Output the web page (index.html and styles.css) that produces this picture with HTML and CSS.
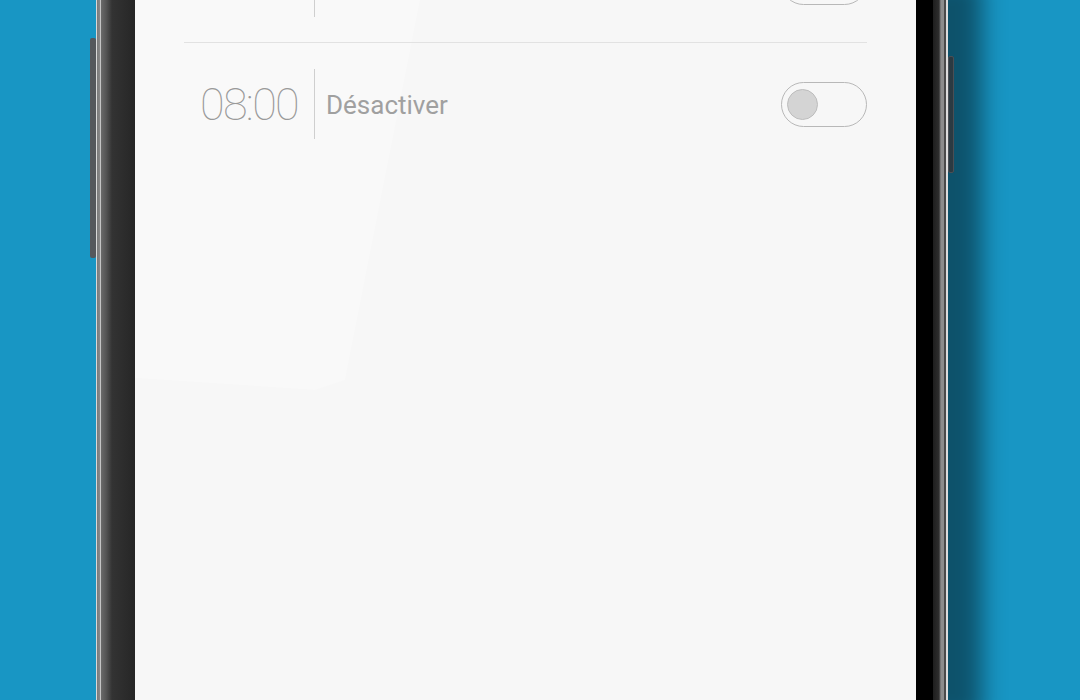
FILE: index.html
```html
<!DOCTYPE html>
<html lang="fr">
<head>
    <meta charset="UTF-8">
    <meta name="viewport" content="width=device-width, initial-scale=1.0">
    <title>Alarmes</title>
    <link rel="stylesheet" href="styles.css">
</head>
<body>
    <div class="phone">
        <span class="side-button left"></span>
        <span class="side-button right"></span>
        <div class="screen">
            <div class="glare"></div>
            <ul class="alarm-list">
                <li class="alarm">
                    <span class="time">07:00</span>
                    <span class="divider"></span>
                    <span class="label">Désactiver</span>
                    <span class="toggle"><span class="knob"></span></span>
                </li>
                <li class="alarm">
                    <span class="time">08:00</span>
                    <span class="divider"></span>
                    <span class="label">Désactiver</span>
                    <span class="toggle"><span class="knob"></span></span>
                </li>
            </ul>
        </div>
    </div>
</body>
</html>
```

FILE: styles.css
```css
body {
    margin: 0;
    padding: 0 0 0 96px;
    height: 700px;
    overflow: hidden;
    background-color: #1896c4;
    font-family: Roboto, 'Noto Sans', sans-serif;
}

.phone {
    position: relative;
    width: 852px;
    height: 750px;
    margin-top: -25px;
    box-sizing: border-box;
    padding: 0 32px 0 39px;
    background: linear-gradient(to right,
        #d9d9d9 0, #d9d9d9 1px,
        #7a7a7a 1px, #8a8a8a 4px,
        #c4c4c4 4px, #c4c4c4 5px,
        #6a6a6a 5px, #555 10px,
        #333 16px, #262626 39px,
        #000 39px, #000 calc(100% - 15px),
        #1e1e1e calc(100% - 15px), #2e2e2e calc(100% - 9px),
        #8c8c8c calc(100% - 7px), #8c8c8c calc(100% - 4px),
        #4a4a4a calc(100% - 4px), #4a4a4a calc(100% - 2px),
        #dcdcdc calc(100% - 2px));
    box-shadow: 38px 0 22px -4px rgba(0, 0, 0, 0.45);
}

.side-button {
    position: absolute;
    width: 6px;
    border-radius: 2px;
    background-color: #55585c;
}

.side-button.left {
    left: -6px;
    top: 63px;
    height: 220px;
}

.side-button.right {
    right: -6px;
    top: 81px;
    height: 117px;
    background-color: #2b3a42;
    border: 1px solid #4a4f55;
    box-sizing: border-box;
}

.screen {
    position: relative;
    height: 100%;
    background-color: #f7f7f7;
    overflow: hidden;
}

.glare {
    position: absolute;
    inset: 0;
    background-color: rgba(255, 255, 255, 0.25);
    clip-path: polygon(0 0, 290px 0, 210px 405px, 180px 415px, 0 403px);
}

.alarm-list {
    position: relative;
    list-style: none;
    margin: -54px 49px 0 49px;
    padding: 0;
}

.alarm {
    display: flex;
    align-items: center;
    height: 121px;
    padding-left: 16px;
    line-height: 1;
}

.alarm + .alarm {
    border-top: 1px solid #e2e2e2;
}

.time {
    width: 100px;
    margin-top: 1px;
    font-size: 45px;
    font-weight: 100;
    color: #9a9a9a;
    letter-spacing: -1.7px;
    white-space: nowrap;
}

.divider {
    width: 1px;
    height: 70px;
    margin: 0 11px 0 14px;
    background-color: #cfcfcf;
}

.label {
    margin-top: 3px;
    font-size: 26px;
    font-weight: 400;
    color: #a0a0a0;
}

.toggle {
    display: flex;
    align-items: center;
    box-sizing: border-box;
    width: 86px;
    height: 45px;
    margin: 2px 0 0 auto;
    padding-left: 5px;
    border: 1px solid #b8b8b8;
    border-radius: 23px;
}

.knob {
    width: 31px;
    height: 31px;
    box-sizing: border-box;
    border-radius: 50%;
    background-color: #d4d4d4;
    border: 1px solid #bdbdbd;
}
```
